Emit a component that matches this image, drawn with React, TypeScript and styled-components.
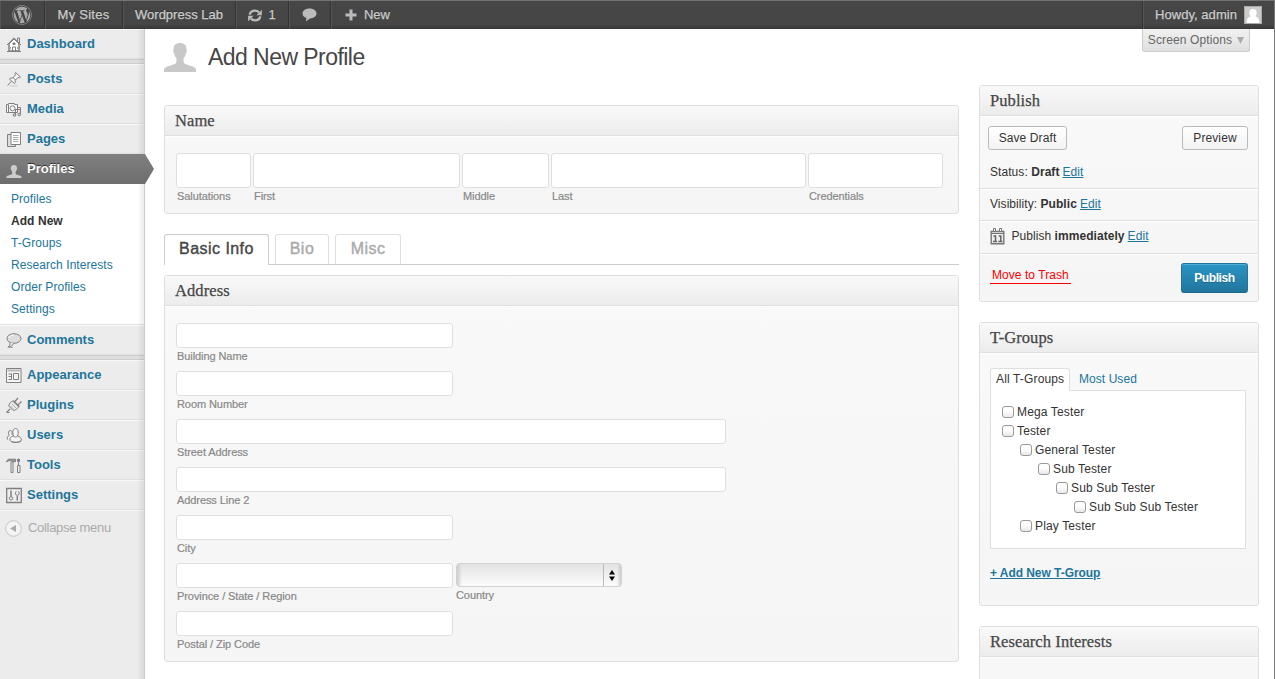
import React from "react";
import styled, { createGlobalStyle, css } from "styled-components";
import { FaWordpress } from "react-icons/fa";

const sans = `"Liberation Sans", Arial, Helvetica, sans-serif`;
const serif = `"Liberation Serif", Georgia, serif`;
const link = "#21759b";

const GlobalStyle = createGlobalStyle`
  *, *::before, *::after { box-sizing: border-box; }
  html, body { margin: 0; padding: 0; height: 679px; overflow: hidden; background: #fff; }
  body { font: 12px/16px ${sans}; color: #333; }
  svg { display: block; flex: none; }
`;

const Page = styled.div`
  display: flex;
  flex-direction: column;
  width: 1275px;
  height: 679px;
  overflow: hidden;
  border-right: 1px solid #777;
`;

/* ---------- admin bar ---------- */

const AdminBar = styled.header`
  display: flex;
  flex: none;
  height: 29px;
  color: #ccc;
  font-size: 13px;
  text-shadow: 0 -1px 0 #333;
  -webkit-text-stroke: 0.25px #ccc;
  background: linear-gradient(#737373 0, #737373 1px, #464646 1px, #464646 24px, #373737 29px);
`;

const BarItem = styled.div<{ $w: number }>`
  display: flex;
  align-items: center;
  justify-content: center;
  gap: 6px;
  width: ${(p) => p.$w}px;
  height: 28px;
  margin-top: 1px;
  border-right: 1px solid #333;
  box-shadow: inset 1px 0 0 #555;
  white-space: nowrap;
`;

const BarLast = styled(BarItem)`
  gap: 7px;
  border-right: 0;
`;

const SiteItem = styled(BarItem)`
  letter-spacing: 0.25px;
`;

const Account = styled.div`
  display: flex;
  align-items: center;
  gap: 7px;
  height: 28px;
  margin: 1px 12px 0 auto;
  padding-left: 12px;
  border-left: 1px solid #333;
  box-shadow: inset 1px 0 0 #555;
  letter-spacing: 0.05px;
`;

const Avatar = styled.div`
  width: 18px;
  height: 18px;
  border: 1px solid #aaa;
  background: #ccc;
`;

/* ---------- sidebar ---------- */

const Body = styled.div`
  display: flex;
  flex: 1;
  min-height: 0;
`;

const Sidebar = styled.nav`
  position: relative;
  display: flex;
  flex-direction: column;
  flex: none;
  width: 145px;
  border-right: 1px solid #ccc;
  background: #ececec;

  &::after {
    content: "";
    position: absolute;
    top: 0;
    right: 0;
    bottom: 0;
    width: 7px;
    background: linear-gradient(to right, rgba(0, 0, 0, 0), rgba(0, 0, 0, 0.075));
  }
`;

const MenuItem = styled.div<{ $current?: boolean }>`
  position: relative;
  display: flex;
  flex: none;
  gap: 5px;
  height: 30px;
  padding-left: 6px;
  border-top: 1px solid #f9f9f9;
  border-bottom: 1px solid #dfdfdf;
  color: ${link};
  font-size: 13px;
  font-weight: bold;
  line-height: 28px;

  ${(p) =>
    p.$current &&
    css`
      z-index: 1;
      border-color: #808080 transparent #6d6d6d;
      color: #fff;
      text-shadow: 0 -1px 0 #333;
      background: linear-gradient(#808080, #6d6d6d);
      background-origin: border-box;
      width: 145px;
    `}
`;

const IconSlot = styled.span`
  width: 16px;
  padding-top: 6px;
`;

const Arrow = styled.svg`
  position: absolute;
  top: -1px;
  left: 145px;
`;

const Separator = styled.div`
  flex: none;
  height: 5px;
  background: #dfdfdf;
  border-top: 1px solid #cfcfcf;
  border-bottom: 1px solid #cfcfcf;
`;

const Submenu = styled.ul`
  flex: none;
  margin: 0;
  padding: 4px 0 4px 11px;
  list-style: none;
  background: #fff;
  border-bottom: 1px solid #dfdfdf;
`;

const SubItem = styled.li<{ $current?: boolean }>`
  height: 22px;
  line-height: 22px;
  letter-spacing: 0.06px;
  color: ${(p) => (p.$current ? "#333" : link)};
  font-weight: ${(p) => (p.$current ? "bold" : "normal")};
`;

const Collapse = styled.div`
  display: flex;
  align-items: center;
  gap: 6px;
  height: 35px;
  padding-left: 5px;
  border-top: 1px solid #f9f9f9;
  color: #aaa;
  font-size: 13px;
  letter-spacing: -0.3px;
`;

/* ---------- content ---------- */

const Main = styled.main`
  flex: none;
  width: 795px;
  margin-left: 19px;
`;

const Heading = styled.h1`
  display: flex;
  gap: 12px;
  height: 76px;
  margin: 0;
  padding-top: 14px;
  color: #464646;
  font-size: 23px;
  font-weight: normal;
  line-height: 29px;
  letter-spacing: -0.55px;
`;

const Panel = styled.section<{ $h: number }>`
  height: ${(p) => p.$h}px;
  border: 1px solid #dfdfdf;
  border-radius: 3px;
  background: linear-gradient(#f9f9f9, #f5f5f5);
  box-shadow: inset 0 1px 0 #fff;
`;

const PanelTitle = styled.h3`
  height: 30px;
  margin: 0;
  padding-left: 10px;
  border-bottom: 1px solid #dfdfdf;
  border-radius: 3px 3px 0 0;
  color: #464646;
  font: normal 16.5px/29px ${serif};
  letter-spacing: 0.08px;
  -webkit-text-stroke: 0.25px #464646;
  background: linear-gradient(#f9f9f9, #ececec);
  box-shadow: 0 1px 0 #fff;
`;

const NameRow = styled.div`
  display: flex;
  gap: 2px;
  padding: 17px 0 0 11px;
`;

const AddressFields = styled.div`
  display: grid;
  grid-auto-rows: 48px;
  padding: 17px 0 0 11px;
`;

const FieldGroup = styled.div`
  display: flex;
  gap: 3px;
`;

const Field = styled.label<{ $w: number }>`
  display: flex;
  flex-direction: column;
  flex: none;
  width: ${(p) => p.$w}px;
  color: #888;
  font-size: 11px;
  line-height: 16px;
  letter-spacing: -0.08px;
  -webkit-text-stroke: 0.2px #888;
`;

const Input = styled.input<{ $h: number }>`
  width: 100%;
  height: ${(p) => p.$h}px;
  margin: 0;
  padding: 0;
  border: 1px solid #dfdfdf;
  border-radius: 3px;
  background: #fff;
`;

const Caption = styled.span`
  padding-left: 1px;
  white-space: nowrap;
`;

const SelectBox = styled.div`
  display: flex;
  justify-content: flex-end;
  height: 24px;
  border: 1px solid #d2d2d2;
  border-radius: 4px;
  background: linear-gradient(to right, #ccc, rgba(240, 240, 240, 0) 5px, rgba(240, 240, 240, 0) 160px, #ccc),
    linear-gradient(#e3e3e3, #fcfcfc);
`;

const SelectArrows = styled.span`
  display: flex;
  align-items: center;
  justify-content: center;
  width: 18px;
  padding-right: 1px;
  border-left: 1px solid #bbb;
`;

const Tabs = styled.div`
  display: flex;
  gap: 6px;
  height: 31px;
  margin: 20px 0 10px;
  border-bottom: 1px solid #ccc;
`;

const Tab = styled.div<{ $w: number; $active?: boolean }>`
  width: ${(p) => p.$w}px;
  height: ${(p) => (p.$active ? 31 : 30)}px;
  border: 1px solid ${(p) => (p.$active ? "#ccc" : "#dfdfdf")};
  border-bottom: 0;
  border-radius: 3px 3px 0 0;
  color: ${(p) => (p.$active ? "#464646" : "#aaa")};
  background: #fff;
  font-size: 16px;
  line-height: 28px;
  letter-spacing: 0.45px;
  text-align: center;
  -webkit-text-stroke: 0.4px currentColor;
`;

/* ---------- right column ---------- */

const Side = styled.aside`
  display: flex;
  flex-direction: column;
  flex: none;
  width: 280px;
  margin-left: 20px;
  letter-spacing: 0.06px;
`;

const ScreenOptions = styled.div`
  display: flex;
  flex: none;
  justify-content: center;
  align-items: center;
  gap: 5px;
  align-self: flex-end;
  width: 108px;
  height: 23px;
  margin: 0 9px 33px 0;
  border: 1px solid #ccc;
  border-top: 0;
  border-radius: 0 0 3px 3px;
  color: #666;
  letter-spacing: 0.12px;
  background: linear-gradient(#f1f1f1, #e0e0e0);
`;

const SidePanel = styled(Panel)`
  flex: none;
  margin-bottom: 20px;
`;

const Actions = styled.div`
  display: flex;
  justify-content: space-between;
  padding: 10px 10px 5px 8px;
`;

const Button = styled.button<{ $w: number }>`
  width: ${(p) => p.$w}px;
  height: 24px;
  padding: 0;
  border: 1px solid #bbb;
  border-radius: 3px;
  color: #333;
  font: 12px/20px ${sans};
  letter-spacing: 0.1px;
  background: linear-gradient(#fff, #f3f3f3);
`;

const PrimaryButton = styled(Button)`
  height: 30px;
  border-color: #21759b #21759b #1e6a8d;
  color: #fff;
  font-weight: bold;
  text-shadow: 0 1px 0 rgba(0, 0, 0, 0.2);
  letter-spacing: -0.4px;
  background: linear-gradient(#2a95c5, #21759b);
  box-shadow: inset 0 1px 0 rgba(120, 200, 230, 0.5);
`;

const StatusRow = styled.div<{ $h: number; $lift?: boolean }>`
  display: flex;
  align-items: center;
  gap: 3px;
  height: ${(p) => p.$h}px;
  padding: 0 0 ${(p) => (p.$lift ? 2 : 0)}px 10px;
  border-bottom: 1px solid #dfdfdf;
  box-shadow: 0 1px 0 #fff;
  white-space: pre;
`;

const Link = styled.a`
  color: ${link};
  text-decoration: underline;
`;

const Publishing = styled.div`
  display: flex;
  justify-content: space-between;
  padding: 9px 10px 0 10px;
`;

const Trash = styled.span`
  width: 81px;
  height: 18px;
  margin-top: 3px;
  padding-left: 2px;
  border-bottom: 1px solid #f00;
  color: #f00;
  line-height: 18px;
`;

const GroupTabs = styled.div`
  display: flex;
  height: 22px;
  margin: 15px 0 0 10px;
`;

const GroupTab = styled.span<{ $active?: boolean }>`
  height: 23px;
  line-height: 21px;
  white-space: nowrap;
  ${(p) =>
    p.$active
      ? css`
          position: relative;
          width: 80px;
          padding-left: 5px;
          border: 1px solid #dfdfdf;
          border-bottom: 0;
          border-radius: 3px 3px 0 0;
          background: #fff;
          letter-spacing: 0.15px;
        `
      : css`
          padding-left: 9px;
          line-height: 23px;
          color: ${link};
        `}
`;

const GroupList = styled.div`
  width: 256px;
  height: 159px;
  padding: 11px 0 0 11px;
  margin-left: 10px;
  border: 1px solid #dfdfdf;
  background: #fff;
`;

const GroupRow = styled.label<{ $level: number }>`
  display: flex;
  align-items: center;
  gap: 3px;
  height: 19px;
  padding-left: ${(p) => p.$level * 18}px;
  letter-spacing: 0.14px;
`;

const Check = styled.span`
  width: 12px;
  height: 12px;
  border: 1px solid #999;
  border-radius: 3px;
  background: linear-gradient(#fff 40%, #e8e8e8);
`;

const AddLink = styled(Link)`
  display: block;
  margin: 16px 0 0 10px;
  font-weight: bold;
  letter-spacing: -0.05px;
`;

/* ---------- icons ---------- */

const SyncIcon = () => (
  <svg width="14" height="13" viewBox="0 0 14 13" fill="none" stroke="#bbb" strokeWidth="2.300">
    <path d="M1.600 5.600C2.300 3 4.600 1.600 7 1.600c1.800 0 3.100.7 4 1.900" />
    <path d="M12.400 7.400c-.7 2.600-3 4-5.400 4-1.800 0-3.100-.7-4-1.900" />
    <path d="M13.900.800v5.400H8.500zM.100 12.200V6.800h5.400z" fill="#bbb" stroke="none" />
  </svg>
);

const BubbleIcon = () => (
  <svg width="15" height="14" viewBox="0 0 15 14" fill="#bbb">
    <path d="M7.500.5C11.600.5 14.500 2.700 14.500 5.500S11.600 10.300 8 10.400L3.800 13.600l.7-3.700C2 9.200.5 7.600.5 5.500.5 2.700 3.400.5 7.500.5z" />
  </svg>
);

const PlusIcon = () => (
  <svg width="12" height="12" viewBox="0 0 12 12" stroke="#bbb" strokeWidth="3">
    <path d="M6 .5v11M.5 6h11" />
  </svg>
);

const silhouette =
  "M16 0c4.500 0 6.500 2.300 6.500 6.500 0 1 .3 1.400.2 2.500-.1 1-.9 1.300-1.100 2.200-.4 1.800-.9 2.800-2 3.900v3.600c0 2 2 2.600 5 3.500 4.400 1.300 7.400 2 7.400 4.800v2H0v-2c0-2.800 3-3.500 7.400-4.800 3-.9 5-1.500 5-3.500v-3.600c-1.100-1.100-1.600-2.100-2-3.900-.2-.9-1-1.200-1.100-2.200-.1-1.100.2-1.500.2-2.500C9.500 2.300 11.500 0 16 0z";

const ProfileGlyph = () => (
  <svg width="32" height="29" viewBox="0 0 32 29" fill="#c8c8c8">
    <path d={silhouette} />
  </svg>
);

const icons: Record<string, React.ReactNode> = {
  Dashboard: (
    <>
      <path d="M3 8v7h10V8L8 3z" fill="#fff" />
      <path d="M1 9l7-7.200L15 9M3 8v7h10V8M11.500 5V2h2v5" />
      <path d="M6.500 15v-4h3v4M1 15.500h14" />
      <path d="M4.500 11v2M11.500 11v2" stroke="#aaa" />
      <path d="M7 7h2v1.500H7z" fill="#777" />
    </>
  ),
  Posts: (
    <>
      <path d="M9.500 1.500l5 4.500-1.200.8-1.400-.3-2.800 3 .2 2.200-1 .8-5-4.600 1-.8 2.200.1L9.400 4 9 2.400z" fill="#f6f6f6" />
      <path d="M5.500 10.200L1.500 14.500M7 6.500l2.600 2.600" />
      <path d="M3 15h9" stroke="#ccc" />
    </>
  ),
  Media: (
    <>
      <path d="M.5 3.500h2v-1h6v1h3v8H.5z" fill="#f6f6f6" />
      <circle cx="6.500" cy="7.300" r="2.500" />
      <path d="M2.500 4v7M11.500 6.500h3v6.500M9.500 8v6.500M9.500 8.500h5" />
      <circle cx="8.500" cy="14" r="1.300" fill="#ccc" />
      <circle cx="13.300" cy="13.500" r="1.300" fill="#ccc" />
    </>
  ),
  Pages: (
    <>
      <path d="M1.500 3.500h8v12h-8z" fill="#ddd" />
      <path d="M5 1.500h9.500v12H5z" fill="#fff" />
      <path d="M7 4.500h5.500M7 6.500h5.500M7 8.500h5.500M7 10.500h5.500" stroke="#aaa" />
    </>
  ),
  Comments: (
    <>
      <ellipse cx="8" cy="6.500" rx="7" ry="4.800" fill="#ddd" />
      <path d="M4 10.500c.3 2-.4 3.500-2 4.500 3 0 5-1.500 5.600-3.700" fill="#e6e6e6" />
      <path d="M3 6c.5-2 2.500-2.800 5-2.800" stroke="#fff" />
      <path d="M1.500 15.500H7" stroke="#aaa" />
    </>
  ),
  Appearance: (
    <>
      <path d="M.5 1.500h14.500v14H.5z" fill="#f4f4f4" />
      <path d="M1.500 3.500h13" stroke="#bbb" strokeWidth="2" />
      <path d="M7.500 6.500h5v6h-5z" />
      <path d="M2.500 7h3.500M2.500 9.500h3.500M2.500 12.500h3.500M5.500 7v5.500" />
    </>
  ),
  Plugins: (
    <>
      <path d="M2.800 9C3 6 5.500 3.800 8.500 4l4.200 4.800c-.5 2.800-3 4.700-5.700 4.500z" fill="#eee" />
      <path d="M7 4l6.300 6M9 4.500l3-3.500M12 8l3.500-3.500M4 12l-3.500 3.500M.5 15.500h3" strokeWidth="1.200" />
      <path d="M6 7l4 4M4.500 9l3 3" stroke="#aaa" />
    </>
  ),
  Users: (
    <>
      <path d="M1.500 12.500C.5 10.500 2 9 3.200 8.500 2 5.500 2.500 3.500 4.200 3.500S6.500 5 6 8" fill="#f4f4f4" />
      <path d="M7.500 9C6 5 7 1.500 9.500 1.500S13 5 11.500 9c2.500.5 3.800 2 3.800 4 0 3-10.300 3-11.300.3C3.500 11 5 9.500 7.500 9z" fill="#f4f4f4" />
      <path d="M7.500 9.200c1.300 1 2.700 1 4 0M5 14.500c2 1.300 8 1.300 10-.5" />
    </>
  ),
  Tools: (
    <>
      <path d="M.5 5C1 2.500 3 1.800 5 2.200h4.500v2.500H6.500L6 3.800C4 3.500 2 3.500.5 5z" fill="#999" />
      <path d="M5 5h2v10.500H5z" fill="#eee" />
      <path d="M12.500 1.500v7M11.500 2v2.500h2V2M11.500 8.500h2.500v7h-2.500z" />
    </>
  ),
  Settings: (
    <>
      <path d="M.7 1.500h14.600v14H.7z" fill="#eee" strokeWidth="1.300" />
      <path d="M5 3.500v6M11.300 9v4.500" strokeWidth="1.500" />
      <circle cx="5" cy="11.300" r="1.700" />
      <circle cx="11.300" cy="6.300" r="2" />
      <path d="M11.300 3v3" stroke="#eee" strokeWidth="1.500" />
    </>
  ),
  Profiles: <path d={silhouette} transform="translate(.4 4) scale(.47 .45)" fill="#ccc" stroke="none" />,
};

const MenuIcon = ({ name }: { name: string }) => (
  <svg width="16" height="17" viewBox="0 0 16 17" fill="none" stroke="#808080">
    {icons[name]}
  </svg>
);

const CalendarIcon = () => (
  <svg width="15" height="17" viewBox="0 0 15 17" fill="none" stroke="#777">
    <path d="M1.200 3.500h12.600v12.300H1.200z" fill="#eee" strokeWidth="1.400" />
    <path d="M1 5.500h13" />
    <path d="M3.500.5h2v3h-2zM9.500.5h2v3h-2z" fill="#fff" />
    <path d="M3.500 8h2v5M3 13.500h4M8.800 8h2v5M8.300 13.500h4" strokeWidth="1.500" stroke="#666" />
  </svg>
);

/* ---------- page ---------- */

const menuTop = ["Posts", "Media", "Pages"];
const menuBottom = ["Appearance", "Plugins", "Users", "Tools", "Settings"];
const submenu = ["Profiles", "Add New", "T-Groups", "Research Interests", "Order Profiles", "Settings"];
const nameFields: [string, number][] = [
  ["Salutations", 75],
  ["First", 207],
  ["Middle", 87],
  ["Last", 255],
  ["Credentials", 135],
];
const addressTop: [string, number][] = [
  ["Building Name", 277],
  ["Room Number", 277],
  ["Street Address", 550],
  ["Address Line 2", 550],
  ["City", 277],
];
const groups: [string, number][] = [
  ["Mega Tester", 0],
  ["Tester", 0],
  ["General Tester", 1],
  ["Sub Tester", 2],
  ["Sub Sub Tester", 3],
  ["Sub Sub Sub Tester", 4],
  ["Play Tester", 1],
];

const Item = ({ name, current }: { name: string; current?: boolean }) => (
  <MenuItem $current={current}>
    <IconSlot>
      <MenuIcon name={name} />
    </IconSlot>
    {name}
    {current && (
      <Arrow width="9" height="30" viewBox="0 0 9 30">
        <defs>
          <linearGradient id="arrow" x1="0" y1="0" x2="0" y2="1">
            <stop offset="0" stopColor="#808080" />
            <stop offset="1" stopColor="#6d6d6d" />
          </linearGradient>
        </defs>
        <path d="M0 0L9 15 0 30z" fill="url(#arrow)" />
      </Arrow>
    )}
  </MenuItem>
);

const TextField = ({ label, width, height = 25 }: { label: string; width: number; height?: number }) => (
  <Field $w={width}>
    <Input $h={height} />
    <Caption>{label}</Caption>
  </Field>
);

export default function App() {
  return (
    <Page>
      <GlobalStyle />
      <AdminBar>
        <BarItem $w={45}>
          <FaWordpress size={20} color="#aaa" />
        </BarItem>
        <SiteItem $w={78}>My Sites</SiteItem>
        <BarItem $w={113}>Wordpress Lab</BarItem>
        <BarItem $w={53}>
          <SyncIcon />1
        </BarItem>
        <BarItem $w={42}>
          <BubbleIcon />
        </BarItem>
        <BarLast $w={73}>
          <PlusIcon />
          New
        </BarLast>
        <Account>
          Howdy, admin
          <Avatar>
            <svg width="16" height="16" viewBox="0 0 15 16" fill="#fff">
              <path d="M7.500 2c2.600 0 3.700 1.600 3.700 3.700S10 9.200 9.800 9.500c2.500.8 4.200 2.500 4.200 6.500H1c0-4 1.700-5.700 4.200-6.500C5 9.200 3.800 7.800 3.800 5.700S4.900 2 7.500 2z" />
            </svg>
          </Avatar>
        </Account>
      </AdminBar>
      <Body>
        <Sidebar>
          <Item name="Dashboard" />
          <Separator />
          {menuTop.map((m) => (
            <Item key={m} name={m} />
          ))}
          <Item name="Profiles" current />
          <Submenu>
            {submenu.map((s) => (
              <SubItem key={s} $current={s === "Add New"}>
                {s}
              </SubItem>
            ))}
          </Submenu>
          <Item name="Comments" />
          <Separator />
          {menuBottom.map((m) => (
            <Item key={m} name={m} />
          ))}
          <Collapse>
            <svg width="17" height="17" viewBox="0 0 17 17">
              <circle cx="8.500" cy="8.500" r="7.800" fill="#f4f4f4" stroke="#c4c4c4" />
              <path d="M11 5v7L5 8.500z" fill="#aaa" />
            </svg>
            Collapse menu
          </Collapse>
        </Sidebar>
        <Main>
          <Heading>
            <ProfileGlyph />
            Add New Profile
          </Heading>
          <Panel $h={109}>
            <PanelTitle>Name</PanelTitle>
            <NameRow>
              {nameFields.map(([label, w]) => (
                <TextField key={label} label={label} width={w} height={35} />
              ))}
            </NameRow>
          </Panel>
          <Tabs>
            <Tab $w={105} $active>
              Basic Info
            </Tab>
            <Tab $w={54}>Bio</Tab>
            <Tab $w={66}>Misc</Tab>
          </Tabs>
          <Panel $h={387}>
            <PanelTitle>Address</PanelTitle>
            <AddressFields>
              {addressTop.map(([label, w]) => (
                <TextField key={label} label={label} width={w} />
              ))}
              <FieldGroup>
                <TextField label="Province / State / Region" width={277} />
                <Field $w={166} as="div">
                  <SelectBox>
                    <SelectArrows>
                      <svg width="6" height="11" viewBox="0 0 6 11" fill="#000">
                        <path d="M3 0l3 4.500H0zM3 11L0 6.500h6z" />
                      </svg>
                    </SelectArrows>
                  </SelectBox>
                  <span>Country</span>
                </Field>
              </FieldGroup>
              <TextField label="Postal / Zip Code" width={277} />
            </AddressFields>
          </Panel>
        </Main>
        <Side>
          <ScreenOptions>
            Screen Options
            <svg width="7" height="7" viewBox="0 0 7 7" fill="#aaa">
              <path d="M0 0h7L3.500 7z" />
            </svg>
          </ScreenOptions>
          <SidePanel $h={217}>
            <PanelTitle>Publish</PanelTitle>
            <Actions>
              <Button $w={79}>Save Draft</Button>
              <Button $w={66}>Preview</Button>
            </Actions>
            <StatusRow $h={34}>
              <span>
                Status: <b>Draft</b>
              </span>
              <Link>Edit</Link>
            </StatusRow>
            <StatusRow $h={32} $lift>
              <span>
                Visibility: <b>Public</b>
              </span>
              <Link>Edit</Link>
            </StatusRow>
            <StatusRow $h={33} $lift>
              <CalendarIcon />
              <span>
                {" "}Publish <b>immediately</b>
              </span>
              <Link>Edit</Link>
            </StatusRow>
            <Publishing>
              <Trash>Move to Trash</Trash>
              <PrimaryButton $w={67}>Publish</PrimaryButton>
            </Publishing>
          </SidePanel>
          <SidePanel $h={284}>
            <PanelTitle>T-Groups</PanelTitle>
            <GroupTabs>
              <GroupTab $active>All T-Groups</GroupTab>
              <GroupTab>Most Used</GroupTab>
            </GroupTabs>
            <GroupList>
              {groups.map(([label, level]) => (
                <GroupRow key={label} $level={level}>
                  <Check />
                  {label}
                </GroupRow>
              ))}
            </GroupList>
            <AddLink>+ Add New T-Group</AddLink>
          </SidePanel>
          <SidePanel $h={80}>
            <PanelTitle>Research Interests</PanelTitle>
          </SidePanel>
        </Side>
      </Body>
    </Page>
  );
}
